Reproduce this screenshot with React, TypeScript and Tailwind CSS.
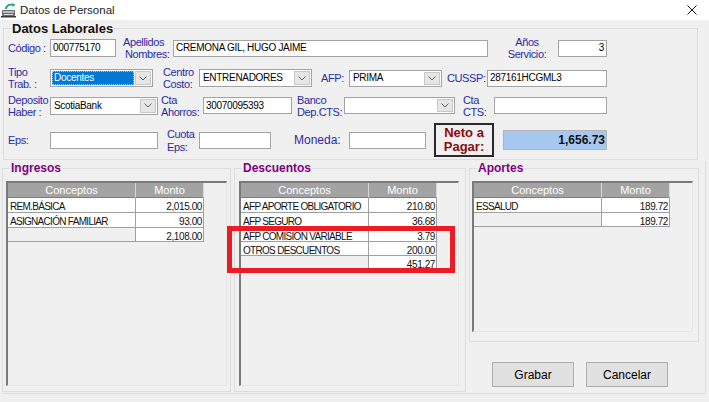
import React from "react";

const LBL = "text-[11px] leading-[12px] tracking-[-0.4px] text-[#2b2ba6] whitespace-nowrap";
const FIELD = "text-[10px] leading-[12px] tracking-[-0.3px]";
const CELL = "text-[10px] leading-[11px] pt-[3px] tracking-[-0.7px]";
const NUM = "text-[10px] leading-[11px] pt-[3px] tracking-[-0.4px]";

function TextBox({ cls, children, right }: { cls: string; children?: React.ReactNode; right?: boolean }) {
  return (
    <div
      className={`${cls} shrink-0 bg-white border border-[#a3a3a3] flex items-center px-[2px] ${FIELD} whitespace-nowrap overflow-hidden ${right ? "justify-end" : ""}`}
    >
      {children}
    </div>
  );
}

function Chevron() {
  return (
    <svg width="8" height="5" viewBox="0 0 8 5">
      <path d="M0.5 0.5 L4 4 L7.5 0.5" fill="none" stroke="#606060" strokeWidth="1" />
    </svg>
  );
}

function Combo({ cls, text, focused }: { cls: string; text?: string; focused?: boolean }) {
  return (
    <div className={`${cls} shrink-0 bg-white border border-[#a3a3a3] flex items-stretch p-[1px]`}>
      <div className={`flex-1 min-w-0 flex items-stretch ${FIELD} whitespace-nowrap overflow-hidden`}>
        {focused ? (
          <div className="flex-1 mr-[1px] bg-[#0078d7] text-white flex items-center pl-[2px] outline outline-1 outline-dotted outline-[#9ec3ea] -outline-offset-1">
            {text}
          </div>
        ) : (
          <div className="flex-1 flex items-center pl-[2px]">{text}</div>
        )}
      </div>
      <div className="w-[16px] shrink-0 bg-[#e6e6e6] border border-[#c8c8c8] flex items-center justify-center">
        <Chevron />
      </div>
    </div>
  );
}

type Row = [string, string];

function Grid({ frame, rows, total }: { frame: string; rows: Row[]; total: string }) {
  return (
    <div
      className={`${frame} bg-[#f0f0f0] border-l-2 border-t-2 border-l-[#7a7a7a] border-t-[#7a7a7a] border-r border-b border-r-[#e6e6e6] border-b-[#e6e6e6]`}
    >
      <div className="flex h-[15px] text-white text-[11px] leading-[14px]">
        <div className="w-[128px] bg-[#a3a3a3] border-r border-b border-r-[#d8d8d8] border-b-[#7d7d7d] text-center">Conceptos</div>
        <div className="w-[68px] bg-[#a3a3a3] border-r border-b border-r-[#d8d8d8] border-b-[#7d7d7d] text-center">Monto</div>
      </div>
      {rows.map(([c, m], i) => (
        <div key={c} className={`flex text-[#111] ${i < 2 ? "h-[15px]" : "h-[14px]"}`}>
          <div className={`w-[128px] bg-white border-r border-b border-[#a0a0a0] pl-[2px] whitespace-nowrap overflow-hidden ${CELL}`}>{c}</div>
          <div className={`w-[68px] bg-white border-r border-b border-[#a0a0a0] text-right pr-[1px] ${NUM}`}>{m}</div>
        </div>
      ))}
      <div className="flex h-[14px] text-[#111]">
        <div className="w-[128px] bg-[#f0f0f0] border-r border-b border-[#a0a0a0]"></div>
        <div className={`w-[68px] bg-white border-r border-b border-[#a0a0a0] text-right pr-[1px] ${NUM}`}>{total}</div>
      </div>
    </div>
  );
}

function Legend({ children }: { children: React.ReactNode }) {
  return (
    <legend className="ml-[7px] px-[1px] text-[12px] leading-[14px] font-bold text-[#800080]">{children}</legend>
  );
}

export default function App() {
  return (
    <div className="w-[709px] h-[402px] bg-[#f0f0f0] overflow-hidden relative font-['Liberation_Sans',Arial,sans-serif] text-black">
      {/* Title bar */}
      <div className="h-[20px] bg-white flex items-center">
        <svg className="ml-[1px]" width="15" height="16" viewBox="0 0 15 16">
          <path d="M4 7 C4 3 8 1 12 2 L11 0.5 L14.5 3 L11 5 L11.5 3.5 C8.5 3 6 4.5 6 7 Z" fill="#2a9d8f" />
          <rect x="1" y="8" width="13" height="6" rx="1" fill="#6b6b6b" />
          <rect x="2" y="9" width="11" height="2" fill="#bdbdbd" />
          <rect x="3" y="12" width="9" height="1" fill="#e0e0e0" />
          <rect x="0" y="14" width="15" height="1.5" fill="#3a3a3a" />
        </svg>
        <span className="ml-[4px] text-[11.5px] leading-[14px] text-[#1a1a1a]">Datos de Personal</span>
        <svg className="ml-auto mr-[12px]" width="10" height="10" viewBox="0 0 10 10">
          <path d="M0.5 0.5 L9.5 9.5 M9.5 0.5 L0.5 9.5" stroke="#111" strokeWidth="1" />
        </svg>
      </div>

      {/* Datos Laborales */}
      <fieldset className="ml-[3px] mt-[1px] w-[695px] border border-[#dcdcdc] pb-[2px]">
        <legend className="ml-[7px] px-[1px] text-[13px] leading-[15px] font-bold text-[#111]">Datos Laborales</legend>

        {/* Row 1 */}
        <div className="flex items-center h-[24px] pl-[4px]">
          <div className={`${LBL} w-[42px] shrink-0`}>Código :</div>
          <TextBox cls="w-[66px] h-[18px]">000775170</TextBox>
          <div className={`${LBL} ml-[4px] w-[50px] shrink-0`}>
            <div className="pl-[3px]">Apellidos</div>
            <div className="pl-[5px]">Nombres:</div>
          </div>
          <TextBox cls="ml-[3px] w-[315px] h-[17px]">CREMONA GIL, HUGO JAIME</TextBox>
          <div className={`${LBL} ml-[16px] w-[46px] shrink-0 text-center`}>
            <div>Años</div>
            <div>Servicio:</div>
          </div>
          <TextBox cls="ml-[8px] w-[49px] h-[17px]" right>3</TextBox>
        </div>

        {/* Row 2 */}
        <div className="flex items-center h-[24px] mt-[6px] pl-[4px]">
          <div className={`${LBL} w-[42px] shrink-0`}>
            <div>Tipo</div>
            <div>Trab. :</div>
          </div>
          <Combo cls="w-[103px] h-[18px]" text="Docentes" focused />
          <div className={`${LBL} ml-[10px] w-[36px] shrink-0`}>
            <div>Centro</div>
            <div>Costo:</div>
          </div>
          <Combo cls="w-[113px] h-[18px]" text="ENTRENADORES" />
          <div className={`${LBL} ml-[9px] w-[28px] shrink-0`}>AFP:</div>
          <Combo cls="w-[93px] h-[17px]" text="PRIMA" />
          <div className={`${LBL} ml-[5px] w-[40px] shrink-0`}>CUSSP:</div>
          <TextBox cls="w-[120px] h-[17px]">287161HCGML3</TextBox>
        </div>

        {/* Row 3 */}
        <div className="flex items-center h-[25px] mt-[3px] pl-[4px]">
          <div className={`${LBL} w-[42px] shrink-0`}>
            <div>Deposito</div>
            <div>Haber :</div>
          </div>
          <Combo cls="w-[108px] h-[18px]" text="ScotiaBank" />
          <div className={`${LBL} ml-[3px] w-[42px] shrink-0`}>
            <div>Cta</div>
            <div>Ahorros:</div>
          </div>
          <TextBox cls="w-[89px] h-[17px]">30070095393</TextBox>
          <div className={`${LBL} ml-[5px] w-[47px] shrink-0`}>
            <div>Banco</div>
            <div>Dep.CTS:</div>
          </div>
          <Combo cls="w-[111px] h-[17px]" text="" />
          <div className={`${LBL} ml-[8px] w-[31px] shrink-0`}>
            <div>Cta</div>
            <div>CTS:</div>
          </div>
          <TextBox cls="w-[113px] h-[17px]" />
        </div>

        {/* Row 4 */}
        <div className="flex items-center h-[34px] mt-[5px] pl-[4px]">
          <div className={`${LBL} w-[42px] shrink-0`}>Eps:</div>
          <TextBox cls="w-[108px] h-[17px]" />
          <div className={`${LBL} ml-[9px] w-[32px] shrink-0`}>
            <div>Cuota</div>
            <div className="mt-[1px]">Eps:</div>
          </div>
          <TextBox cls="w-[72px] h-[17px]" />
          <div className="ml-[23px] w-[55px] shrink-0 text-[12px] leading-[14px] text-[#2b2ba6]">Moneda:</div>
          <TextBox cls="w-[77px] h-[17px]" />
          <div className="ml-[8px] w-[60px] h-[34px] shrink-0 border-2 border-[#2a2a2a] flex flex-col justify-center items-center text-[13px] leading-[14px] font-bold text-[#8b0a0a]">
            <div>Neto a</div>
            <div>Pagar:</div>
          </div>
          <div className="ml-[9px] w-[104px] h-[20px] shrink-0 bg-[#a6c8f0] border border-[#b4b4b4] flex items-center justify-end pr-[1px] text-[12px] font-bold text-[#111]">
            1,656.73
          </div>
        </div>
      </fieldset>

      {/* Lower groups */}
      <div className="flex items-start mt-[1px] ml-[2px] w-[704px] h-[233px] border-r border-b border-[#dcdcdc]">
        <fieldset className="w-[229px] h-[231px] border border-[#dcdcdc]">
          <Legend>Ingresos</Legend>
          <Grid
            frame="mt-[6px] ml-[3px] w-[221px] h-[205px]"
            rows={[
              ["REM.BÁSICA", "2,015.00"],
              ["ASIGNACIÓN FAMILIAR", "93.00"],
            ]}
            total="2,108.00"
          />
        </fieldset>

        <fieldset className="ml-[3px] w-[232px] h-[231px] border border-[#dcdcdc]">
          <Legend>Descuentos</Legend>
          <Grid
            frame="mt-[6px] ml-[4px] w-[220px] h-[205px]"
            rows={[
              ["AFP APORTE OBLIGATORIO", "210.80"],
              ["AFP SEGURO", "36.68"],
              ["AFP COMISION VARIABLE", "3.79"],
              ["OTROS DESCUENTOS", "200.00"],
            ]}
            total="451.27"
          />
        </fieldset>

        <div className="ml-[3px] w-[230px] flex flex-col">
          <fieldset className="w-[230px] h-[181px] border border-[#dcdcdc]">
            <Legend>Aportes</Legend>
            <Grid frame="mt-[6px] ml-[2px] w-[221px] h-[151px]" rows={[["ESSALUD", "189.72"]]} total="189.72" />
          </fieldset>
          <div className="flex gap-[12px] mt-[20px] pl-[23px]">
            <button className="w-[82px] h-[25px] bg-[#e1e1e1] border border-[#adadad] text-[12px] text-black">Grabar</button>
            <button className="w-[82px] h-[25px] bg-[#e1e1e1] border border-[#adadad] text-[12px] text-black">Cancelar</button>
          </div>
        </div>
      </div>

      {/* Red annotation */}
      <div className="absolute left-[227px] top-[226px] w-[228px] h-[47px] border-[5px] border-[#ec1c24] pointer-events-none"></div>
    </div>
  );
}
